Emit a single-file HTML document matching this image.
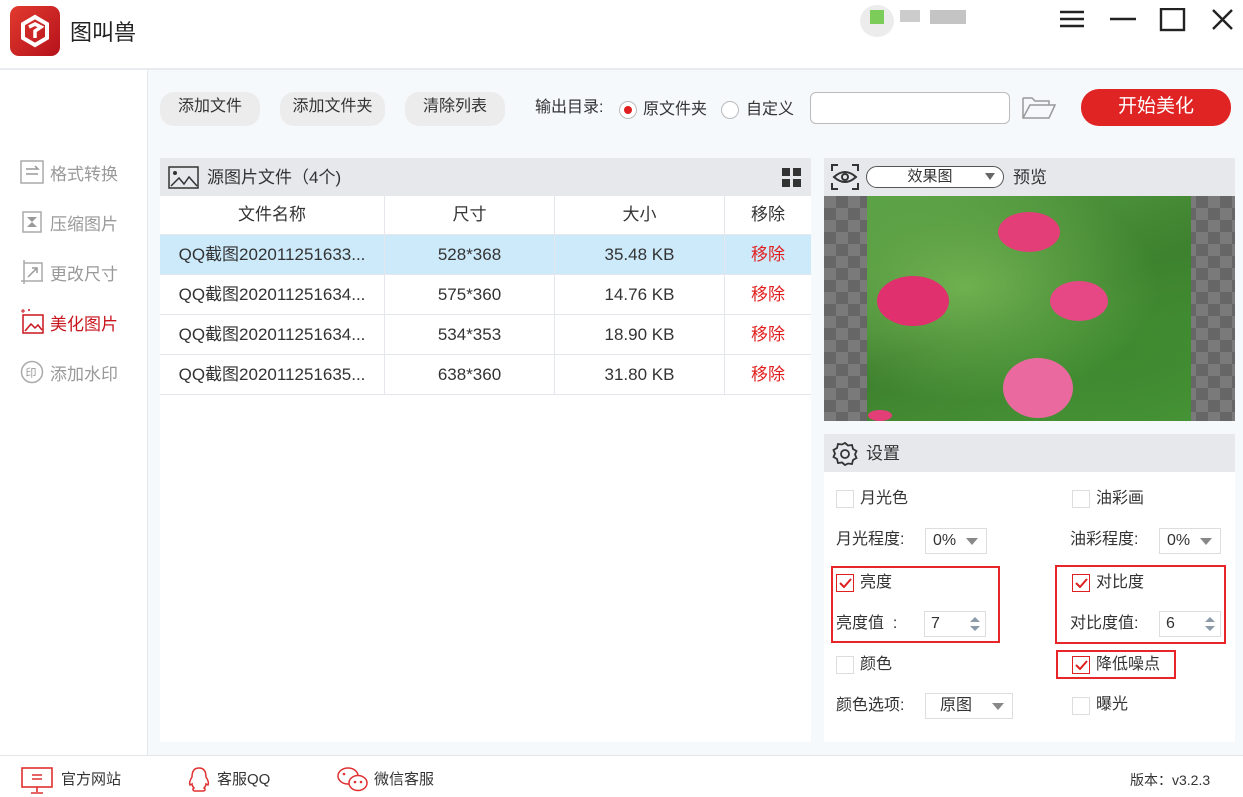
<!DOCTYPE html>
<html><head><meta charset="utf-8"><style>
*{margin:0;padding:0;box-sizing:border-box}
body{width:1243px;height:797px;position:relative;background:#fff;font-family:"Liberation Sans","Noto Sans CJK SC",sans-serif;color:#333;overflow:hidden;font-size:16px}
.a{position:absolute}
.btn{position:absolute;top:92px;height:34px;background:#ececec;border-radius:14px;font-size:16px;line-height:30px;text-align:center;color:#333}
.side{position:absolute;left:20px;font-size:17px;color:#999;display:flex;align-items:center;gap:6px}
.row{position:absolute;left:160px;width:651px;height:40px;border-bottom:1px solid #e4e7eb;font-size:17px;color:#333}
.row div{position:absolute;top:0;height:40px;line-height:40px;text-align:center}
.c1{left:0;width:224px}.c2{left:224px;width:170px;border-left:1px solid #e4e7eb}.c3{left:394px;width:170px;border-left:1px solid #e4e7eb}.c4{left:564px;width:87px;border-left:1px solid #e4e7eb}
.red{color:#e02020}
.cb{position:absolute;width:18px;height:18px;border:1px solid #ddd;background:#fff}
.cbk{position:absolute;width:18px;height:18px;border:1px solid #e02020;background:#fff}
.lbl{position:absolute;font-size:16px;color:#333;line-height:18px}
.sel{position:absolute;height:26px;border:1px solid #ddd;background:#fff;font-size:16px;line-height:24px}
.tri{position:absolute;right:8px;top:9px;width:0;height:0;border-left:6px solid transparent;border-right:6px solid transparent;border-top:7px solid #888}
.box{position:absolute;border:2px solid #e8262a}
</style></head><body>
<div class="a" style="left:10px;top:6px;width:50px;height:50px;border-radius:9px;background:linear-gradient(135deg,#e23a2f,#b5121b)"></div>
<svg class="a" style="left:18px;top:14px" width="34" height="34" viewBox="0 0 34 34"><path d="M17 3 L29 10 L29 24 L17 31 L5 24 L5 10 Z" fill="none" stroke="#fff" stroke-width="4"/><path d="M11 13 L17 10 L23 13 L17 17 L17 24" fill="none" stroke="#fff" stroke-width="3.5"/></svg>
<div class="a" style="left:70px;top:15px;font-size:22px;color:#222">图叫兽</div>
<div class="a" style="left:860px;top:5px;width:34px;height:32px;border-radius:50%;background:#ececec"></div>
<div class="a" style="left:870px;top:10px;width:14px;height:14px;background:#7ccc5a"></div>
<div class="a" style="left:900px;top:10px;width:20px;height:12px;background:#ccc"></div>
<div class="a" style="left:930px;top:10px;width:36px;height:14px;background:#c4c4c4"></div>
<svg class="a" style="left:1058px;top:8px" width="180" height="26"><g stroke="#222" stroke-width="2.4" fill="none"><path d="M2 4h24M2 11h24M2 18h24"/><path d="M52 11h26"/><rect x="103" y="1" width="23" height="21"/><path d="M155 2l19 19M174 2l-19 19"/></g></svg>
<div class="a" style="left:0;top:68px;width:1243px;height:2px;background:#e8ebf0"></div>
<div class="a" style="left:147px;top:70px;width:1px;height:686px;background:#e6e8ec"></div>
<div class="a" style="left:148px;top:70px;width:1095px;height:686px;background:#f6f9fc"></div>
<div class="side" style="top:159px"><svg width="24" height="26"><rect x="1" y="2" width="22" height="22" fill="none" stroke="#aaa" stroke-width="1.5"/><path d="M6 10h12l-3-3M18 15H6" stroke="#999" fill="none" stroke-width="1.5"/></svg>格式转换</div>
<div class="side" style="top:209px"><svg width="24" height="26"><path d="M3 3h18v20H3z" fill="none" stroke="#aaa" stroke-width="1.5"/><path d="M7 8h10l-5 5 5 5H7l5-5z" fill="#999"/></svg>压缩图片</div>
<div class="side" style="top:259px"><svg width="24" height="26"><path d="M4 1v24M1 22h22M4 4h18v18" fill="none" stroke="#aaa" stroke-width="1.5"/><path d="M8 18l9-9M12 9h5v5" stroke="#999" fill="none" stroke-width="1.5"/></svg>更改尺寸</div>
<div class="side" style="top:309px;color:#c8161d"><svg width="24" height="26"><rect x="3" y="6" width="20" height="18" fill="none" stroke="#c8161d" stroke-width="1.5"/><path d="M5 22l6-7 4 4 3-3 4 5" stroke="#c8161d" fill="none" stroke-width="1.5"/><path d="M1 2h4M3 0v4M8 1h2M9 0v2" stroke="#c8161d"/></svg>美化图片</div>
<div class="side" style="top:359px"><svg width="24" height="26"><circle cx="12" cy="13" r="10.5" fill="none" stroke="#aaa" stroke-width="1.5"/><text x="5.5" y="17.5" font-size="11" fill="#999" font-family="Noto Sans CJK SC">印</text></svg>添加水印</div>
<div class="btn" style="left:160px;width:100px">添加文件</div>
<div class="btn" style="left:280px;width:105px">添加文件夹</div>
<div class="btn" style="left:405px;width:100px">清除列表</div>
<div class="a" style="left:535px;top:99px;font-size:16px;line-height:18px">输出目录:</div>
<div class="a" style="left:619px;top:101px;width:18px;height:18px;border:1px solid #bbb;border-radius:50%;background:#fff"></div>
<div class="a" style="left:624px;top:106px;width:8px;height:8px;border-radius:50%;background:#e02020"></div>
<div class="a" style="left:643px;top:101px;font-size:16px;line-height:18px">原文件夹</div>
<div class="a" style="left:721px;top:101px;width:18px;height:18px;border:1px solid #bbb;border-radius:50%;background:#fff"></div>
<div class="a" style="left:746px;top:101px;font-size:16px;line-height:18px">自定义</div>
<div class="a" style="left:810px;top:92px;width:200px;height:32px;border:1px solid #bbb;border-radius:6px;background:#fff"></div>
<svg class="a" style="left:1021px;top:95px" width="36" height="26"><path d="M2 3h9l3 3h14v4M2 3v20h26l6-13H9L2 23" fill="none" stroke="#999" stroke-width="1.5"/></svg>
<div class="a" style="left:1081px;top:89px;width:150px;height:37px;border-radius:18px;background:#e02424;color:#fff;font-size:19px;text-align:center;line-height:35px">开始美化</div>
<div class="a" style="left:160px;top:158px;width:651px;height:584px;background:#fff"></div>
<div class="a" style="left:160px;top:158px;width:651px;height:38px;background:#e6e8eb"></div>
<svg class="a" style="left:168px;top:166px" width="32" height="24"><rect x="1" y="1" width="29" height="21" fill="none" stroke="#333" stroke-width="1.5"/><circle cx="7" cy="7" r="2" fill="#333"/><path d="M3 20l8-8 5 6 5-7 8 9" fill="none" stroke="#333" stroke-width="1.5"/></svg>
<div class="a" style="left:207px;top:169px;font-size:17px;line-height:18px">源图片文件（4个)</div>
<div class="a" style="left:782px;top:168px;width:8px;height:8px;background:#333"></div><div class="a" style="left:793px;top:168px;width:8px;height:8px;background:#333"></div><div class="a" style="left:782px;top:179px;width:8px;height:8px;background:#333"></div><div class="a" style="left:793px;top:179px;width:8px;height:8px;background:#333"></div>
<div class="row" style="top:196px;height:39px;background:#fff"><div class="c1" style="height:38px;line-height:38px">文件名称</div><div class="c2" style="height:38px;line-height:38px">尺寸</div><div class="c3" style="height:38px;line-height:38px">大小</div><div class="c4" style="height:38px;line-height:38px">移除</div></div>
<div class="row" style="top:235px;background:#cdeafb"><div class="c1">QQ截图202011251633...</div><div class="c2">528*368</div><div class="c3">35.48 KB</div><div class="c4 red">移除</div></div>
<div class="row" style="top:275px"><div class="c1">QQ截图202011251634...</div><div class="c2">575*360</div><div class="c3">14.76 KB</div><div class="c4 red">移除</div></div>
<div class="row" style="top:315px"><div class="c1">QQ截图202011251634...</div><div class="c2">534*353</div><div class="c3">18.90 KB</div><div class="c4 red">移除</div></div>
<div class="row" style="top:355px"><div class="c1">QQ截图202011251635...</div><div class="c2">638*360</div><div class="c3">31.80 KB</div><div class="c4 red">移除</div></div>
<div class="a" style="left:824px;top:158px;width:411px;height:38px;background:#e6e8eb"></div>
<svg class="a" style="left:831px;top:164px" width="28" height="26"><path d="M1 7V1h6M21 1h6v6M27 19v6h-6M7 25H1v-6" fill="none" stroke="#333" stroke-width="2"/><path d="M3 13q11-10 22 0q-11 10-22 0z" fill="none" stroke="#333" stroke-width="2"/><circle cx="14" cy="13" r="3" fill="none" stroke="#333" stroke-width="2"/></svg>
<div class="a" style="left:866px;top:166px;width:138px;height:22px;border:1.5px solid #555;border-radius:11px;background:#fff;font-size:15px;line-height:19px;text-align:center;padding-right:10px">效果图<div class="tri" style="top:6px;border-top-color:#666;border-left-width:5px;border-right-width:5px"></div></div>
<div class="a" style="left:1013px;top:169px;font-size:17px;line-height:18px">预览</div>
<div class="a" style="left:824px;top:196px;width:411px;height:225px;background-color:#7a7a7a;background-image:linear-gradient(45deg,#666 25%,transparent 25%,transparent 75%,#666 75%),linear-gradient(45deg,#666 25%,transparent 25%,transparent 75%,#666 75%);background-size:24px 24px;background-position:0 0,12px 12px"></div>
<div class="a" style="left:867px;top:196px;width:324px;height:225px;background:radial-gradient(ellipse at 30% 40%,#6fb050,transparent 60%),radial-gradient(ellipse at 80% 70%,#3f8a30,transparent 60%),linear-gradient(160deg,#5aa245,#3d7f2e 50%,#4c9a3a)"></div>
<div class="a" style="left:998px;top:212px;width:62px;height:40px;border-radius:50%;background:#e33e78"></div>
<div class="a" style="left:877px;top:276px;width:72px;height:50px;border-radius:50%;background:#e0306e"></div>
<div class="a" style="left:1050px;top:281px;width:58px;height:40px;border-radius:50%;background:#e54885"></div>
<div class="a" style="left:1003px;top:358px;width:70px;height:60px;border-radius:50%;background:#ea6aa0"></div>
<div class="a" style="left:868px;top:410px;width:24px;height:11px;border-radius:50%;background:#e33e78"></div>
<div class="a" style="left:824px;top:434px;width:411px;height:308px;background:#fff"></div>
<div class="a" style="left:824px;top:434px;width:411px;height:38px;background:#e6e8eb"></div>
<svg class="a" style="left:832px;top:441px" width="26" height="26" viewBox="0 0 26 26"><path d="M13 2l3 2.5 4-.5 1 4 3.5 2-1.5 3.5 1.5 3.5-3.5 2-1 4-4-.5L13 24l-3-2.5-4 .5-1-4-3.5-2L3 12.5 1.5 9 5 7l1-4 4 .5z" fill="none" stroke="#333" stroke-width="1.8"/><circle cx="13" cy="13" r="4" fill="none" stroke="#333" stroke-width="1.8"/></svg>
<div class="a" style="left:866px;top:445px;font-size:17px;line-height:18px">设置</div>
<div class="cb" style="left:836px;top:490px"></div><div class="lbl" style="left:860px;top:490px">月光色</div>
<div class="cb" style="left:1072px;top:490px"></div><div class="lbl" style="left:1096px;top:490px">油彩画</div>
<div class="lbl" style="left:836px;top:531px">月光程度:</div>
<div class="sel" style="left:925px;top:528px;width:62px;padding-left:7px">0%<div class="tri"></div></div>
<div class="lbl" style="left:1070px;top:531px">油彩程度:</div>
<div class="sel" style="left:1159px;top:528px;width:62px;padding-left:7px">0%<div class="tri"></div></div>
<div class="box" style="left:831px;top:566px;width:169px;height:77px"></div>
<div class="cbk" style="left:836px;top:574px"></div><svg class="a" style="left:839px;top:578px" width="13" height="10"><path d="M1 5l4 4 7-8" fill="none" stroke="#e02020" stroke-width="2"/></svg>
<div class="lbl red" style="left:860px;top:574px">亮度</div>
<div class="lbl" style="left:836px;top:615px">亮度值 &nbsp;:</div>
<div class="sel" style="left:924px;top:611px;width:62px;padding-left:6px">7<svg class="a" style="left:44px;top:4px" width="12" height="16"><path d="M1 6l5-5 5 5zM1 10l5 5 5-5z" fill="#8a9aa8"/></svg></div>
<div class="box" style="left:1055px;top:565px;width:171px;height:79px"></div>
<div class="cbk" style="left:1072px;top:574px"></div><svg class="a" style="left:1075px;top:578px" width="13" height="10"><path d="M1 5l4 4 7-8" fill="none" stroke="#e02020" stroke-width="2"/></svg>
<div class="lbl red" style="left:1096px;top:574px">对比度</div>
<div class="lbl" style="left:1070px;top:615px">对比度值:</div>
<div class="sel" style="left:1159px;top:611px;width:62px;padding-left:6px">6<svg class="a" style="left:44px;top:4px" width="12" height="16"><path d="M1 6l5-5 5 5zM1 10l5 5 5-5z" fill="#8a9aa8"/></svg></div>
<div class="box" style="left:1056px;top:650px;width:120px;height:29px"></div>
<div class="cb" style="left:836px;top:656px"></div><div class="lbl" style="left:860px;top:656px">颜色</div>
<div class="cbk" style="left:1072px;top:656px"></div><svg class="a" style="left:1075px;top:660px" width="13" height="10"><path d="M1 5l4 4 7-8" fill="none" stroke="#e02020" stroke-width="2"/></svg>
<div class="lbl red" style="left:1096px;top:656px">降低噪点</div>
<div class="lbl" style="left:836px;top:697px">颜色选项:</div>
<div class="sel" style="left:925px;top:693px;width:88px;padding-left:14px">原图<div class="tri"></div></div>
<div class="cb" style="left:1072px;top:697px"></div><div class="lbl" style="left:1096px;top:696px">曝光</div>
<div class="a" style="left:0;top:755px;width:1243px;height:1px;background:#e4e6ea"></div>
<svg class="a" style="left:21px;top:767px" width="32" height="28"><rect x="1" y="1" width="30" height="19" fill="none" stroke="#e03030" stroke-width="1.6"/><path d="M11 8h10M11 12h10M16 20v5M10 26h12" stroke="#e03030" stroke-width="1.6"/></svg>
<div class="a" style="left:61px;top:771px;font-size:15px;line-height:18px">官方网站</div>
<svg class="a" style="left:187px;top:766px" width="24" height="28"><path d="M12 2c-6 0-7 5-7 9-2 3-3 6-2 8l2-1c0 2 1 3 2 4-2 1-1 3 1 3h8c2 0 3-2 1-3 1-1 2-2 2-4l2 1c1-2 0-5-2-8 0-4-1-9-7-9z" fill="none" stroke="#e03030" stroke-width="1.5"/></svg>
<div class="a" style="left:217px;top:771px;font-size:15px;line-height:18px">客服QQ</div>
<svg class="a" style="left:336px;top:766px" width="34" height="28"><ellipse cx="12" cy="10" rx="10" ry="8" fill="none" stroke="#e03030" stroke-width="1.5"/><ellipse cx="22" cy="17" rx="9" ry="7.5" fill="#fff" stroke="#e03030" stroke-width="1.5"/><circle cx="8" cy="8" r="1.3" fill="#e03030"/><circle cx="19" cy="16" r="1.3" fill="#e03030"/><circle cx="25" cy="16" r="1.3" fill="#e03030"/></svg>
<div class="a" style="left:374px;top:771px;font-size:15px;line-height:18px">微信客服</div>
<div class="a" style="left:1130px;top:771px;font-size:14px;line-height:18px">版本：v3.2.3</div>
</body></html>
